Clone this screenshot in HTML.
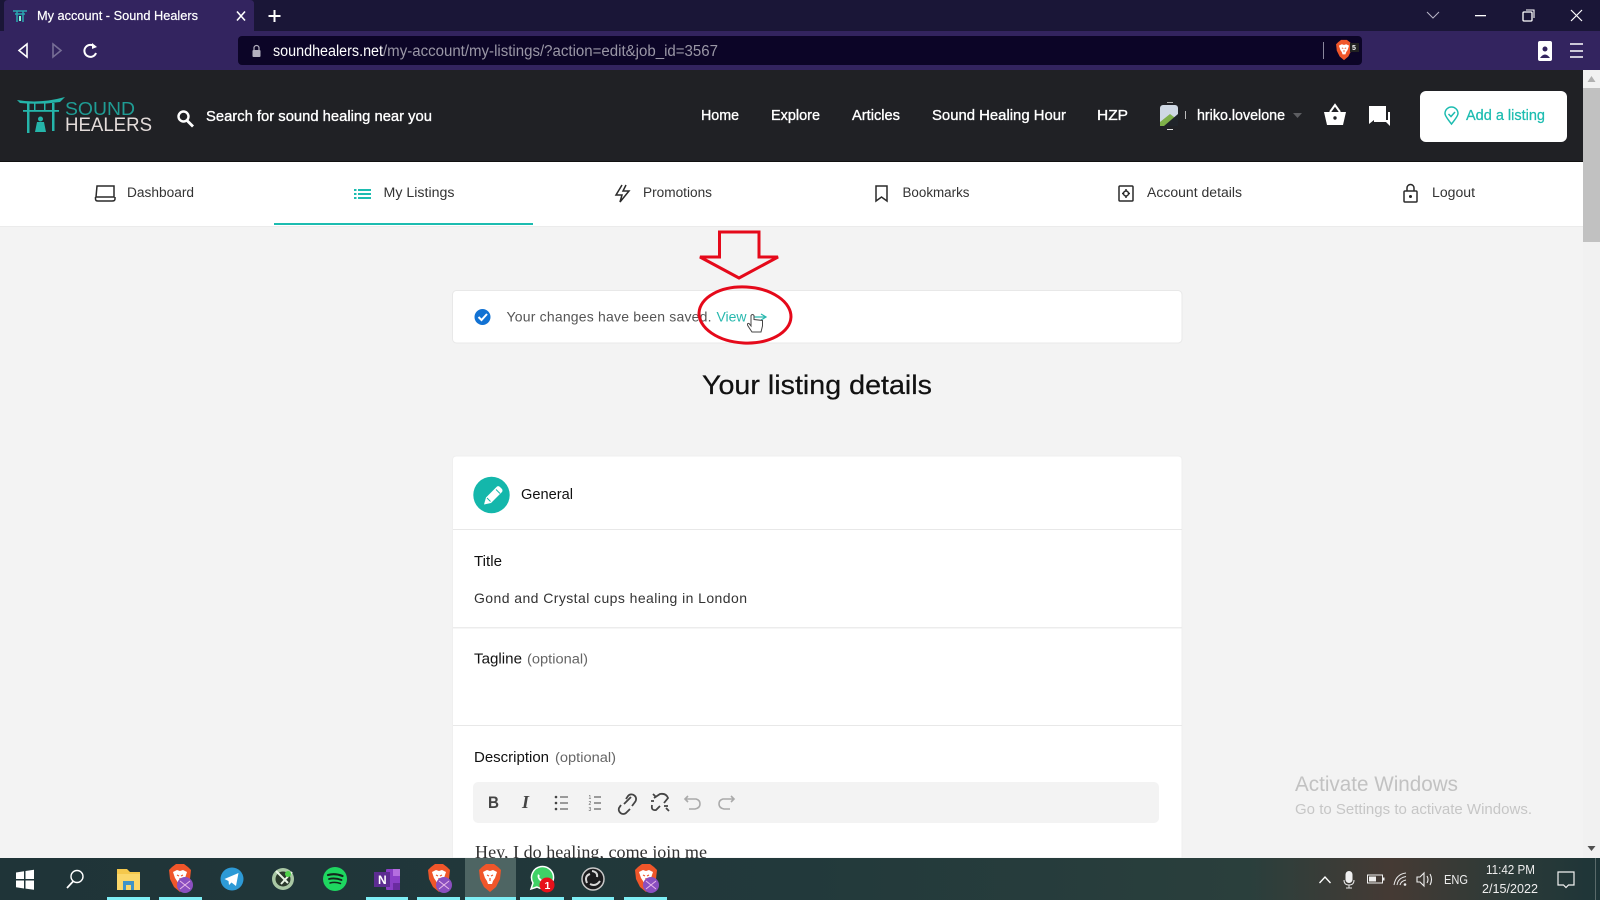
<!DOCTYPE html>
<html lang="en"><head><meta charset="utf-8"><title>My account - Sound Healers</title>
<style>
html,body{margin:0;padding:0;width:1600px;height:900px;overflow:hidden;background:#f3f3f3}
svg{display:block;position:absolute;left:0;top:0}
text{font-family:"Liberation Sans",sans-serif;white-space:pre}
.w{fill:#fff}
.m{stroke:#fff;stroke-width:.35px}
</style></head><body>
<svg width="1600" height="900" viewBox="0 0 1600 900" xmlns="http://www.w3.org/2000/svg">
<defs>
<linearGradient id="tb" x1="0" x2="1" y1="0" y2="0"><stop offset="0" stop-color="#1f3438"/><stop offset=".5" stop-color="#22393b"/><stop offset=".78" stop-color="#2a3f3c"/><stop offset=".87" stop-color="#453a34"/><stop offset=".95" stop-color="#2a3a38"/><stop offset="1" stop-color="#1e3538"/></linearGradient>
<g id="brave"><path d="M-8-11-4-14H4L8-11 11-8 10 1 6 9 0 14-6 9-10 1-11-8Z" fill="#f0562a"/><path d="M-7-6-3-8 0-7 3-8 7-6 5 0 3 3 2 6H-2L-3 3-5 0Z" fill="#fff"/><path d="M-3-3-1-2M3-3 1-2M0 0V3" stroke="#f0562a" stroke-width="1.200" fill="none"/></g>
<g id="bravep"><use href="#brave"/><circle cx="5" cy="7" r="8" fill="#8a4fc0"/><path d="M0 3 10 11M10 3 0 11" stroke="#e8b8e8" stroke-width="1"/></g>
</defs>
<!-- browser chrome -->
<rect width="1600" height="31" fill="#1a1637"/>
<path d="M4 31V4Q4 0 8 0H250Q254 0 254 4V31Z" fill="#33245f"/>
<rect y="31" width="1600" height="39" fill="#33245f"/>
<g stroke="#2aa6b0" stroke-width="1.500" fill="none"><path d="M13 11H27M15 14H25M17 11V22M23 11V22"/></g><rect x="19" y="16" width="2" height="5" fill="#8fd"/>
<text x="37" y="20" font-size="13" class="w" stroke="#fff" stroke-width=".2" textLength="161" lengthAdjust="spacingAndGlyphs">My account - Sound Healers</text>
<path d="M237 11.500 245 20.500M245 11.500 237 20.500" stroke="#fff" stroke-width="1.600"/>
<path d="M274.500 10V22M268.500 16H280.500" stroke="#fff" stroke-width="2"/>
<path d="M27 44 19 50.500 27 57Z" fill="none" stroke="#fff" stroke-width="1.600"/>
<path d="M53 44 61 50.500 53 57Z" fill="none" stroke="#776e96" stroke-width="1.600"/>
<path d="M95 47A6 6 0 1 0 96 53" fill="none" stroke="#fff" stroke-width="2"/><path d="M92 43 97 47 92 49Z" fill="#fff"/>
<rect x="238" y="36" width="1124" height="29" rx="4" fill="#0c0527"/>
<rect x="252.500" y="50" width="8" height="7" rx="1" fill="#b5b2c0"/><path d="M254 50V48A2.500 2.500 0 0 1 259 48V50" fill="none" stroke="#b5b2c0" stroke-width="1.200"/>
<text x="273" y="56" font-size="15.500" class="w" textLength="110" lengthAdjust="spacingAndGlyphs">soundhealers.net</text>
<text x="383" y="56" font-size="15.500" fill="#9a97a6" textLength="335" lengthAdjust="spacingAndGlyphs">/my-account/my-listings/?action=edit&amp;job_id=3567</text>
<rect x="1323" y="42" width="1" height="17" fill="#8a879c"/>
<g transform="translate(1344 50) scale(.72)"><use href="#brave"/></g>
<rect x="1350" y="43" width="9" height="9" fill="#222"/><text x="1352" y="50" font-size="7" class="w" font-weight="bold">5</text>
<rect x="1538" y="41" width="14" height="20" rx="2" fill="#fff"/><circle cx="1545" cy="49" r="2.500" fill="#33245f"/><path d="M1540 58Q1545 51 1550 58Z" fill="#33245f"/>
<path d="M1570 44H1583M1570 51H1583M1570 57H1583" stroke="#fff" stroke-width="1.600"/>
<path d="M1427 12 1433 18 1439 12" fill="none" stroke="#b8b5c6" stroke-width="1"/>
<rect x="1475" y="15" width="11" height="1.300" fill="#fff"/>
<rect x="1523" y="12" width="9" height="9" rx="1" fill="none" stroke="#fff" stroke-width="1.300"/><path d="M1526 10H1534V18" fill="none" stroke="#fff" stroke-width="1.100"/>
<path d="M1571 10 1582 21M1582 10 1571 21" stroke="#fff" stroke-width="1.200"/>
<!-- site header -->
<rect y="70" width="1583" height="92" fill="#202125"/>
<rect y="161" width="1583" height="1" fill="#111"/>
<g fill="#25b5aa"><path d="M17 100Q40 104 65 97L60 102Q40 105 20 103Z"/><rect x="23" y="110" width="36" height="1.800"/><rect x="27" y="103" width="2.500" height="30"/><rect x="52" y="103" width="2.500" height="28"/><rect x="34" y="103" width="1.500" height="8"/><rect x="44" y="103" width="1.500" height="8"/><circle cx="40.500" cy="119" r="2.500"/><path d="M35 132 37 122H44L46 132Z"/></g>
<text x="65" y="115" font-size="18" fill="#1f9c94" textLength="70" lengthAdjust="spacingAndGlyphs">SOUND</text>
<text x="65" y="131" font-size="19" fill="#e4dcda" textLength="87" lengthAdjust="spacingAndGlyphs">HEALERS</text>
<circle cx="183.500" cy="116.500" r="5" fill="none" stroke="#fff" stroke-width="2.400"/><path d="M187 120.500 193 126.500" stroke="#fff" stroke-width="2.800"/>
<text x="206" y="121" font-size="15" class="w m" textLength="226" lengthAdjust="spacingAndGlyphs">Search for sound healing near you</text>
<g font-size="15" class="w m">
<text x="701" y="120" textLength="38" lengthAdjust="spacingAndGlyphs">Home</text>
<text x="771" y="120" textLength="49" lengthAdjust="spacingAndGlyphs">Explore</text>
<text x="852" y="120" textLength="48" lengthAdjust="spacingAndGlyphs">Articles</text>
<text x="932" y="120" textLength="134" lengthAdjust="spacingAndGlyphs">Sound Healing Hour</text>
<text x="1097" y="120" textLength="31" lengthAdjust="spacingAndGlyphs">HZP</text>
<text x="1197" y="120" textLength="88" lengthAdjust="spacingAndGlyphs">hriko.lovelone</text>
</g>
<rect x="1160" y="105" width="18" height="21" rx="3" fill="#cfd8e4"/><path d="M1160 122 1170 114 1178 120V126H1160Z" fill="#7fb04a"/><path d="M1164 126 1178 114V126Z" fill="#20242a"/><rect x="1167" y="102" width="6" height="1" fill="#aaa"/><rect x="1167" y="129" width="6" height="1" fill="#ddd"/><rect x="1185" y="111" width="1" height="8" fill="#bbb"/>
<path d="M1293 113H1302L1297.500 118Z" fill="#5d5e62"/>
<path d="M1324 112H1346L1343 125H1327Z" fill="#fff"/><path d="M1330 112 1335 105 1340 112" fill="none" stroke="#fff" stroke-width="2"/><circle cx="1335" cy="118" r="1.700" fill="#202125"/>
<path d="M1369 106H1386V120H1374L1369 124Z" fill="#fff"/><path d="M1388 112H1390V126L1386 122H1374V120H1388Z" fill="#fff"/>
<rect x="1420" y="91" width="147" height="51" rx="6" fill="#fff"/>
<path d="M1451.500 124Q1445 116 1445 113.500A6.500 6.500 0 0 1 1458 113.500Q1458 116 1451.500 124Z" fill="none" stroke="#1cbcb0" stroke-width="1.500"/><path d="M1448.500 114 1451 116.500 1455 112" fill="none" stroke="#1cbcb0" stroke-width="1.500"/>
<text x="1466" y="120" font-size="14.500" fill="#1cbcb0" stroke="#1cbcb0" stroke-width=".25" textLength="79" lengthAdjust="spacingAndGlyphs">Add a listing</text>
<!-- sub nav -->
<rect y="162" width="1583" height="64" fill="#fff"/>
<rect y="226" width="1583" height="1" fill="#ebebeb"/>
<rect x="274" y="223" width="259" height="2" fill="#1cbcb0"/>
<g font-size="13.500" fill="#333">
<text x="127" y="197" textLength="67" lengthAdjust="spacingAndGlyphs">Dashboard</text>
<text x="383.500" y="197" textLength="71" lengthAdjust="spacingAndGlyphs">My Listings</text>
<text x="643" y="197" textLength="69" lengthAdjust="spacingAndGlyphs">Promotions</text>
<text x="902.500" y="197" textLength="67" lengthAdjust="spacingAndGlyphs">Bookmarks</text>
<text x="1147" y="197" textLength="95" lengthAdjust="spacingAndGlyphs">Account details</text>
<text x="1432" y="197" textLength="43" lengthAdjust="spacingAndGlyphs">Logout</text>
</g>
<g fill="none" stroke="#2a2a2a" stroke-width="1.500">
<path d="M97 186H114V197H96ZM95.500 197V199Q95.500 201 98 201H112Q115 201 115 199V197"/>
<path d="M622 185 616 195H622L620 202 629 191H623L626 185" />
<path d="M876 186H887V201L881.500 197 876 201Z"/>
<rect x="1119" y="186" width="14" height="15" rx="1"/><circle cx="1126" cy="193.500" r="2.500"/><path d="M1126 189V191M1126 196V198M1122 193.500H1124M1128 193.500H1130"/>
<rect x="1404" y="191" width="13" height="11" rx="1"/><path d="M1407 191V188A3.500 3.500 0 0 1 1414 188V191"/>
</g>
<circle cx="1410.500" cy="196.500" r="1.500" fill="#222"/>
<g fill="#1cbcb0"><rect x="354" y="189" width="2.500" height="2"/><rect x="354" y="193" width="2.500" height="2"/><rect x="354" y="197" width="2.500" height="2"/><rect x="358" y="189" width="13" height="2"/><rect x="358" y="193" width="13" height="2"/><rect x="358" y="197" width="13" height="2"/></g>
<!-- notice -->
<rect x="452.500" y="290.500" width="729.500" height="52.500" rx="4" fill="#fff" stroke="#e8e8e8"/>
<circle cx="482.500" cy="317" r="8" fill="#1272d3"/><path d="M478.500 317 481.500 320 487 314" fill="none" stroke="#fff" stroke-width="2"/>
<text x="506.500" y="321.500" font-size="14" fill="#555" textLength="205" lengthAdjust="spacing">Your changes have been saved.</text>
<text x="716.500" y="321.500" font-size="14" fill="#27b8ae" textLength="30" lengthAdjust="spacing">View</text>
<path d="M753 317H765M761 314 766 317 761 320" fill="none" stroke="#27b8ae" stroke-width="1.200"/>
<path d="M719.500 232H759V257H778L739 278 700 257H719.500Z" fill="none" stroke="#e5091a" stroke-width="3" stroke-linejoin="miter"/>
<ellipse cx="745" cy="315" rx="46" ry="28" fill="none" stroke="#e5091a" stroke-width="3" transform="rotate(3 745 315)"/>
<path d="M751 315.500V326L749 323.500Q746.500 323 748 326L752 332H761L762.500 326V320.500L754 319.500V315.500Q752.500 313.500 751 315.500Z" fill="#fff" stroke="#444" stroke-width="1"/>
<text x="702" y="394" font-size="27" fill="#111" stroke="#111" stroke-width=".25" textLength="230" lengthAdjust="spacingAndGlyphs">Your listing details</text>
<!-- form card -->
<path d="M452.500 858V460Q452.500 456 456.500 456H1178Q1182 456 1182 460V858Z" fill="#fff" stroke="#efefef"/>
<rect x="453" y="529" width="729" height="1" fill="#e8e8e8"/>
<rect x="453" y="627" width="729" height="1.500" fill="#ececec"/>
<rect x="453" y="725" width="729" height="1" fill="#e8e8e8"/>
<circle cx="491.500" cy="495" r="18.200" fill="#14b7ab"/>
<path d="M484 504.500 486 497.500 497 486.500Q498.500 485.500 500 487L502 489Q503 490.500 502 492L491 503Z" fill="#fff"/><path d="M496 489.500 500 493.500" stroke="#14b7ab" stroke-width="1"/><path d="M487 498 490.500 501.500" stroke="#14b7ab" stroke-width="1"/>
<text x="521" y="499" font-size="14.500" fill="#111" textLength="52" lengthAdjust="spacingAndGlyphs">General</text>
<text x="474" y="566" font-size="14.500" fill="#111" textLength="28" lengthAdjust="spacingAndGlyphs">Title</text>
<text x="474" y="603" font-size="14" fill="#333" textLength="273" lengthAdjust="spacing">Gond and Crystal cups healing in London</text>
<text x="474" y="663.500" font-size="14.500" fill="#111" textLength="48" lengthAdjust="spacingAndGlyphs">Tagline</text>
<text x="527" y="663.500" font-size="13.500" fill="#666" textLength="61" lengthAdjust="spacingAndGlyphs">(optional)</text>
<text x="474" y="762" font-size="14.500" fill="#111" textLength="75" lengthAdjust="spacingAndGlyphs">Description</text>
<text x="555" y="762" font-size="13.500" fill="#666" textLength="61" lengthAdjust="spacingAndGlyphs">(optional)</text>
<rect x="473" y="782" width="686" height="41" rx="5" fill="#f3f3f3"/>
<text x="488" y="808" font-size="17" font-weight="bold" fill="#444" textLength="11" lengthAdjust="spacingAndGlyphs">B</text>
<text x="522" y="808" font-size="18" font-style="italic" fill="#444" style="font-family:'Liberation Serif',serif" font-weight="bold">I</text>
<g fill="none" stroke="#444" stroke-width="1.300">
<path d="M560 797H568M560 803H568M560 809H568" stroke="#666"/><path d="M594 797H601M594 803H601M594 809H601" stroke="#666"/>
<path d="M621 805 619 808A4.500 4.500 0 0 0 626 813L630 809M624 804 631 797M626 799 628 796A4.500 4.500 0 0 1 635 802L632 806" stroke-width="1.800"/>
<path d="M654 798 660 794Q666 793 668 798L664 803M660 806 656 810Q651 811 652 805M653 794 656 797M666 808 669 811M651 801H654M664 806H668" stroke-width="1.800"/>
<path d="M688 796 685 799 688 802M686 799H696Q700 800 700 804Q700 808 695 809H689" stroke="#aaa" stroke-width="1.600"/>
<path d="M731 796 734 799 731 802M733 799H723Q719 800 719 804Q719 808 724 809H730" stroke="#aaa" stroke-width="1.600"/>
</g>
<g fill="#444"><circle cx="556" cy="797" r="1.300"/><circle cx="556" cy="803" r="1.300"/><circle cx="556" cy="809" r="1.300"/></g>
<g font-size="5" fill="#555"><text x="588.500" y="799">1</text><text x="588.500" y="805">2</text><text x="588.500" y="811">3</text></g>
<text x="475" y="858" font-size="18" fill="#333" style="font-family:'Liberation Serif',serif" textLength="232" lengthAdjust="spacingAndGlyphs">Hey, I do healing, come join me</text>
<!-- scrollbar -->
<rect x="1583" y="70" width="17" height="788" fill="#f1f1f1"/>
<rect x="1583" y="88" width="17" height="154" fill="#c1c1c1"/>
<path d="M1591.500 76 1587.500 82H1595.500Z" fill="#b0b0b0"/><path d="M1587.500 846H1595.500L1591.500 851Z" fill="#505050"/>
<!-- watermark -->
<text x="1295" y="791" font-size="21" fill="#c2c2c2" textLength="163" lengthAdjust="spacingAndGlyphs">Activate Windows</text>
<text x="1295" y="814" font-size="15" fill="#c6c6c6" textLength="237" lengthAdjust="spacingAndGlyphs">Go to Settings to activate Windows.</text>
<!-- taskbar -->
<rect y="858" width="1600" height="42" fill="url(#tb)"/>
<rect x="465" y="858" width="51" height="42" fill="#4e6563"/>
<g fill="#7eeef5"><rect x="107" y="897" width="43" height="3"/><rect x="159" y="897" width="43" height="3"/><rect x="366" y="897" width="42" height="3"/><rect x="417" y="897" width="43" height="3"/><rect x="465" y="897" width="51" height="3"/><rect x="520" y="897" width="44" height="3"/><rect x="572" y="897" width="42" height="3"/><rect x="624" y="897" width="43" height="3"/></g>
<g transform="translate(0 1)">
<path d="M16 871.500 24 870.300V878H16ZM25.500 870 34 868.800V878H25.500ZM16 879.500H24V887.500L16 886.300ZM25.500 879.500H34V888.800L25.500 887.600Z" fill="#fff"/>
<circle cx="77" cy="875.500" r="6" fill="none" stroke="#fff" stroke-width="1.400"/><path d="M73 880.500 67 887" stroke="#fff" stroke-width="1.700"/>
<path d="M117 868H127L130 871H140V889H117Z" fill="#f5c84c"/><rect x="117" y="873" width="23" height="16" fill="#fbd76a"/><rect x="123" y="880" width="11" height="9" fill="#3f93c8"/><rect x="126" y="884" width="5" height="5" fill="#fbd76a"/>
<g transform="translate(180 877)"><use href="#bravep"/></g>
<circle cx="232" cy="878" r="11.500" fill="#2d9ad6"/><path d="M224.500 878 238.500 872 236 885 231.500 881.500 229 884 228.500 880Z" fill="#fff"/>
<circle cx="283" cy="878" r="11" fill="#a9c8a4"/><circle cx="283" cy="878" r="7.500" fill="#2a3a2c"/><path d="M276 870 288 882M281 883 292 871" stroke="#e8f5e4" stroke-width="2"/><circle cx="288" cy="873" r="3" fill="#4fd24a"/>
<circle cx="335" cy="878" r="12" fill="#1ed760"/><g fill="none" stroke="#14261c" stroke-linecap="round"><path d="M328 874Q335 872 342.500 875" stroke-width="2.200"/><path d="M329 878Q335 876.500 341.500 879" stroke-width="1.800"/><path d="M330 882Q335 880.500 340.500 882.500" stroke-width="1.500"/></g>
<rect x="386" y="868" width="14" height="21" rx="1" fill="#8b3fc7"/><rect x="393" y="868" width="7" height="7" fill="#b56ee0"/><rect x="393" y="882" width="7" height="7" fill="#6a2ba0"/>
<rect x="374" y="871" width="16" height="15" fill="#5c2d91"/><text x="378" y="883" font-size="12" font-weight="bold" class="w">N</text>
<g transform="translate(439 877)"><use href="#bravep"/></g>
<g transform="translate(490 877)"><use href="#brave"/></g>
<path d="M531 888 533 882A11 11 0 1 1 537 886Z" fill="#3fd266" stroke="#fff" stroke-width="1.500"/><path d="M538 873Q536 878 543 882L545 880 543 878 542 879 539 876 540 875Z" fill="#fff"/>
<circle cx="547" cy="884" r="7.500" fill="#e8101a"/><text x="544.500" y="888" font-size="10.500" font-weight="bold" class="w">1</text>
<circle cx="593" cy="878" r="11" fill="#1c1c1e" stroke="#c9c9c9" stroke-width="1.500"/><g fill="none" stroke="#d8d8d8" stroke-width="2"><path d="M592 870Q598 871 597 876"/><path d="M587 882Q584 875 590 873"/><path d="M600 880Q596 886 590 883"/></g>
<g transform="translate(646 877)"><use href="#bravep"/></g>
</g>
<path d="M1319.500 883 1325 877 1330.500 883" fill="none" stroke="#fff" stroke-width="1.300"/>
<rect x="1345.500" y="871" width="7" height="12" rx="3.500" fill="#f0f0f0"/><path d="M1344 880Q1344 885 1349 885Q1354 885 1354 880M1349 885V888M1346 888H1352" fill="none" stroke="#e8e8e8" stroke-width="1"/>
<rect x="1367.500" y="875" width="15" height="8" fill="none" stroke="#f0f0f0" stroke-width="1"/><rect x="1369" y="876.500" width="7" height="5" fill="#f0f0f0"/><rect x="1383" y="877.500" width="1.500" height="3" fill="#f0f0f0"/>
<g fill="none" stroke="#e8e8e8" stroke-width="1"><path d="M1394 885Q1396 874 1406 873M1397 885Q1398 878 1406 876.500M1400 885Q1401 881 1406 880"/></g><circle cx="1405" cy="884.500" r="1.300" fill="#eee"/>
<path d="M1417 877H1420L1424 873V886L1420 882H1417ZM1427 876Q1429 879.500 1427 883M1430 874Q1433 879.500 1430 885" fill="none" stroke="#eee" stroke-width="1.100"/>
<text x="1444" y="884" font-size="13" fill="#eee" textLength="24" lengthAdjust="spacingAndGlyphs">ENG</text>
<text x="1486" y="874" font-size="13" fill="#eee" textLength="49" lengthAdjust="spacingAndGlyphs">11:42 PM</text>
<text x="1482" y="893" font-size="13" fill="#eee" textLength="56" lengthAdjust="spacingAndGlyphs">2/15/2022</text>
<path d="M1558 872H1574V885H1568.500L1566 887.500 1563.500 885H1558Z" fill="none" stroke="#f2f2f2" stroke-width="1.200"/>
<rect x="1595" y="858" width="1" height="42" fill="#5a6a6a"/>
</svg>
</body></html>
